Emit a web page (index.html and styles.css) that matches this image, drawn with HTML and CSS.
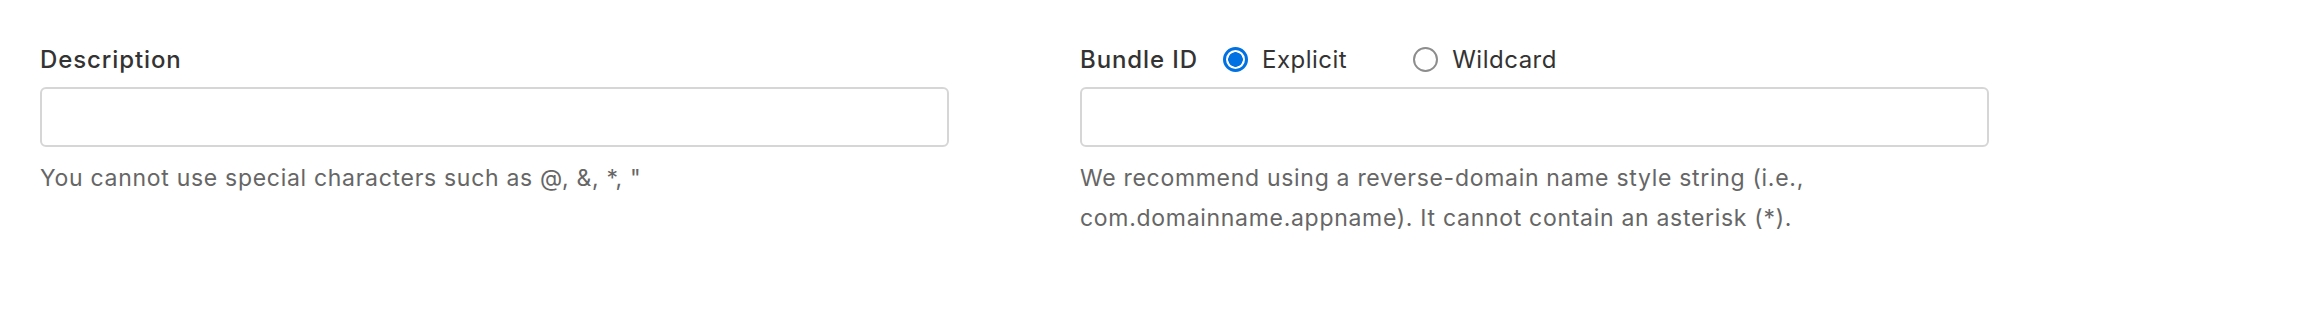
FILE: index.html
```html
<!DOCTYPE html>
<html>
<head>
<meta charset="utf-8">
<link rel="stylesheet" href="styles.css">
</head>
<body>
<div class="form">
  <div class="field">
    <div class="label-row">
      <label class="label">Description</label>
    </div>
    <input class="text-input" type="text">
    <p class="help">You cannot use special characters such as @, &amp;, *, "</p>
  </div>
  <div class="field">
    <div class="label-row">
      <label class="label">Bundle ID</label>
      <div class="radios">
        <label class="radio"><span class="dot checked"></span><span class="radio-text">Explicit</span></label>
        <label class="radio"><span class="dot"></span><span class="radio-text">Wildcard</span></label>
      </div>
    </div>
    <input class="text-input" type="text">
    <p class="help">We recommend using a reverse-domain name style string (i.e., com.domainname.appname). It cannot contain an asterisk (*).</p>
  </div>
</div>
</body>
</html>
```
FILE: styles.css
```css
html, body {
  margin: 0;
  padding: 0;
  background: #ffffff;
}
body {
  font-family: Inter, "Noto Sans", "Liberation Sans", sans-serif;
  color: #333333;
}
.form {
  display: flex;
  gap: 131px;
  padding: 41px 0 0 40px;
}
.field {
  width: 909px;
  display: flex;
  flex-direction: column;
}
.label-row {
  display: flex;
  align-items: center;
  height: 36px;
  margin-bottom: 10px;
}
.label {
  font-size: 24px;
  font-weight: 500;
  color: #333333;
  letter-spacing: 0.9px;
}
.radios {
  display: flex;
  align-items: center;
  gap: 66px;
  margin-left: 25px;
}
.radio {
  display: flex;
  align-items: center;
  gap: 14px;
  font-size: 24px;
  color: #333333;
  letter-spacing: 0.5px;
}
.dot {
  box-sizing: border-box;
  width: 25px;
  height: 25px;
  border-radius: 50%;
  border: 2px solid #8d8d8d;
  background: #fff;
}
.dot.checked {
  border: 3px solid #0071e3;
  background: radial-gradient(circle, #0071e3 0 7px, #ffffff 7.5px);
}
.text-input {
  box-sizing: border-box;
  width: 909px;
  height: 60px;
  margin: 0;
  border: 2px solid #d6d6d6;
  border-radius: 6px;
  background: #fff;
  outline: none;
}
.help {
  margin: 11px 0 0 0;
  font-size: 23px;
  line-height: 40px;
  color: #666666;
  letter-spacing: 0.7px;
}
```
